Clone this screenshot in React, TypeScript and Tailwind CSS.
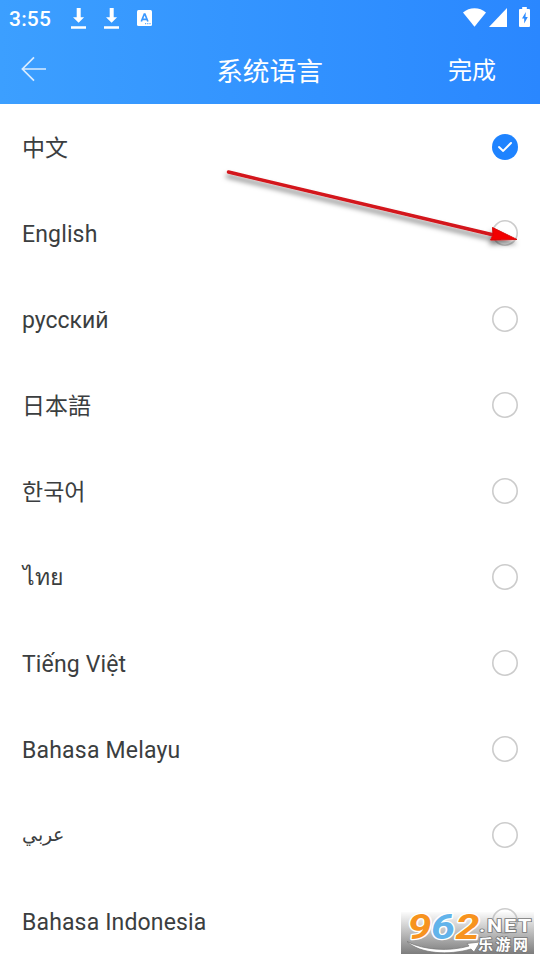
import { useState } from 'react';

const languages = [
  { id: 'zh', label: '中文', className: 'text-[23px]' },
  { id: 'en', label: 'English', className: 'text-[23px] tracking-[0.15px]' },
  { id: 'ru', label: 'русский', className: 'text-[23px]' },
  { id: 'ja', label: '日本語', className: 'text-[23px]' },
  { id: 'ko', label: '한국어', className: 'text-[23px]' },
  { id: 'th', label: 'ไทย', className: 'pb-[2px] pl-px text-[23px] font-light' },
  { id: 'vi', label: 'Tiếng Việt', className: 'text-[23px] tracking-[0.15px]' },
  { id: 'ms', label: 'Bahasa Melayu', className: 'text-[23px] tracking-[0.2px]' },
  { id: 'ar', label: 'عربي', className: 'pb-[5px] text-[19px] font-light' },
  { id: 'id', label: 'Bahasa Indonesia', className: 'text-[23px] tracking-[0.15px]' },
];

function DownloadIcon() {
  return (
    <svg className="h-[21px] w-[15px]" viewBox="0 0 15 21" fill="white">
      <path d="M5.7 0h4v9.3h3.4L7.6 14.8 2 9.3h3.7zM0 18.3h15v2.4H0z" />
    </svg>
  );
}

function StatusBar() {
  return (
    <div className="flex h-9 items-start pl-[9px] pr-[10px] text-white">
      <span className="mt-[5px] w-[62px] text-[21px] leading-7 font-medium tracking-[0.2px]">3:55</span>
      <div className="mt-[8px] flex gap-[18px]">
        <DownloadIcon />
        <DownloadIcon />
        <svg className="mt-[2px] h-4 w-[15px]" viewBox="0 0 15 16">
          <rect width="15" height="16" rx="1.5" fill="white" />
          <path d="M4.3 11.5 7.3 4h.6l3 7.5M5.4 9.3h4.4" fill="none" stroke="#3a98ff" strokeWidth="1.7" />
          <path d="M8 13.7h1.2M10.2 13.7h1.2M12.4 13.7h1.2" stroke="#3a98ff" strokeWidth="1" />
        </svg>
      </div>
      <div className="mt-[7px] ml-auto flex items-start">
        <svg className="mt-px h-[19px] w-[23px]" viewBox="0 0 23 19" fill="white">
          <path d="M0 4.4C6.3-1.3 16.7-1.3 23 4.4L11.5 18.7z" />
        </svg>
        <svg className="ml-[3px] mt-px h-[19px] w-[18px]" viewBox="0 0 18 19" fill="white">
          <path d="M18 0v19H0z" />
        </svg>
        <svg className="ml-[12px] h-5 w-[11px]" viewBox="0 0 11 20">
          <path d="M3.2 0h4.6v2H10a1 1 0 0 1 1 1v16a1 1 0 0 1-1 1H1a1 1 0 0 1-1-1V3a1 1 0 0 1 1-1h2.2z" fill="white" />
          <path d="M6.8 5 3 11.5h2.2v4.9L8.8 10H6.5z" fill="#2d8cff" />
        </svg>
      </div>
    </div>
  );
}

function Radio({ checked }: { checked: boolean }) {
  return (
    <svg className="size-[26px]" viewBox="0 0 26 26" fill="none">
      {checked ? (
        <>
          <circle cx="13" cy="13" r="13" fill="#1e83ff" />
          <path d="m7 13.1 4.2 3.8 7.8-7.9" stroke="white" strokeWidth="2" strokeLinecap="round" strokeLinejoin="round" />
        </>
      ) : (
        <circle cx="13" cy="13" r="12.2" stroke="#cccccc" strokeWidth="1.6" />
      )}
    </svg>
  );
}

function Pointer() {
  return (
    <svg className="pointer-events-none absolute top-[160px] left-[215px] h-[100px] w-[320px]" viewBox="215 160 320 100">
      <defs>
        <filter id="shadow" x="-10%" y="-30%" width="120%" height="180%">
          <feDropShadow dx="-1" dy="4" stdDeviation="2.5" floodColor="#000" floodOpacity="0.5" />
        </filter>
      </defs>
      <g filter="url(#shadow)">
        <path d="M228.5 172 498 236" stroke="#d3141a" strokeWidth="3.4" strokeLinecap="round" />
        <path d="M492.5 227.5 517 239.5 490.5 240 493 235z" fill="#f20000" stroke="#d80a0a" strokeWidth="1" />
      </g>
    </svg>
  );
}

function Watermark() {
  return (
    <div className="absolute top-[912px] left-[401px] h-[42px] w-[133px] bg-linear-to-b from-[#dddddd]/10 to-[#7d7d7d]">
      <svg className="block h-[42px] w-[133px]" viewBox="0 0 133 42">
        <path
          d="M6 29.5C23 38.5 49 39.5 68 34l-2-2.5L79 30l-6 10-3-3C48 43.5 19 42 6 29.5z"
          fill="white"
          stroke="#777"
          strokeWidth="0.7"
        />
        <g
          fontFamily="Roboto, sans-serif"
          fontWeight="bold"
          fontStyle="italic"
          fontSize="34.5"
          stroke="white"
          strokeWidth="2.6"
          strokeLinejoin="round"
          paintOrder="stroke"
        >
          <text x="6.5" y="26.5" textLength="24" lengthAdjust="spacingAndGlyphs" fill="#f7931e">9</text>
          <text x="30" y="26.5" textLength="24" lengthAdjust="spacingAndGlyphs" fill="#62b3ea">6</text>
          <text x="54.5" y="26.5" textLength="24" lengthAdjust="spacingAndGlyphs" fill="#f7931e">2</text>
        </g>
        <g stroke="#777777" strokeWidth="1.6" paintOrder="stroke" fill="white" fontWeight="bold">
          <text
            x="78"
            y="20"
            fontSize="18"
            letterSpacing="1.5"
            textLength="54"
            lengthAdjust="spacingAndGlyphs"
            fontFamily="Roboto, sans-serif"
          >
            .NET
          </text>
          <text x="77" y="37.5" fontSize="15" textLength="50" fontFamily="Noto Sans CJK SC, sans-serif">乐游网</text>
        </g>
      </svg>
    </div>
  );
}

export default function App() {
  const [selected, setSelected] = useState('zh');

  return (
    <div className="relative h-[960px] w-[540px] overflow-hidden bg-white font-['Roboto','Noto_Sans_CJK_SC','Noto_Sans',sans-serif]">
      <header className="h-[104px] bg-linear-to-r from-[#3c9fff] to-[#2a87ff]">
        <StatusBar />
        <div className="grid h-[68px] grid-cols-[1fr_auto_1fr] items-center pr-[44px] pl-[21px] text-white">
          <button aria-label="返回" className="-mt-[3px]">
            <svg className="h-[26px] w-[26px]" viewBox="0 0 26 26" fill="none" stroke="#d9ecff" strokeWidth="1.7">
              <path d="M13 1.3 1.4 13 13 24.7M1.4 13H25" />
            </svg>
          </button>
          <h1 className="mt-[3px] ml-[22px] text-[26.7px] leading-9">系统语言</h1>
          <button className="mt-[2px] justify-self-end text-[24px] leading-9">完成</button>
        </div>
      </header>

      <ul>
        {languages.map((lang) => (
          <li
            key={lang.id}
            onClick={() => setSelected(lang.id)}
            className="flex h-[86px] items-center justify-between px-[22px]"
          >
            <span className={`mt-1 leading-8 text-[#3b3e40] ${lang.className}`}>{lang.label}</span>
            <Radio checked={selected === lang.id} />
          </li>
        ))}
      </ul>

      <Pointer />
      <Watermark />
    </div>
  );
}
